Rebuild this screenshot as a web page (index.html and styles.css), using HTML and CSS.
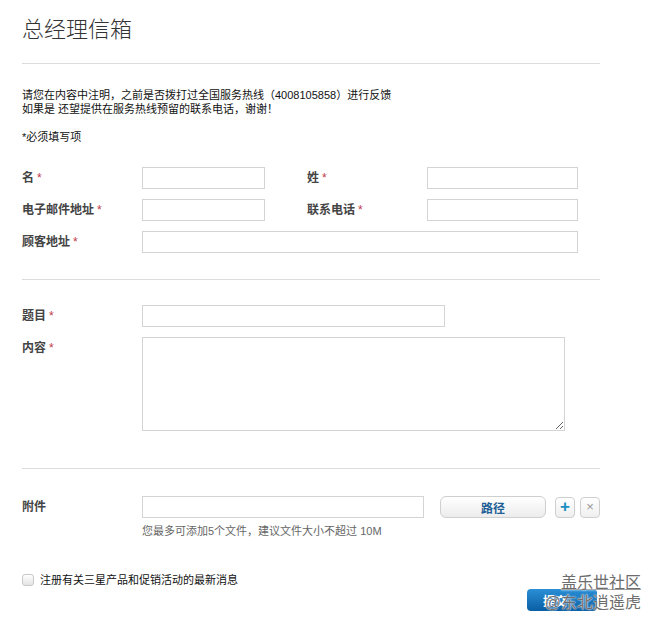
FILE: index.html
```html
<!DOCTYPE html>
<html lang="zh-CN">
<head>
    <meta charset="UTF-8">
    <meta name="viewport" content="width=device-width, initial-scale=1.0">
    <title>总经理信箱</title>
    <link rel="stylesheet" href="styles.css">
</head>
<body>
    <div class="mailbox">
        <h1 class="mailbox-title">总经理信箱</h1>
        <div class="divider"></div>

        <div class="notice">
            <p>请您在内容中注明，之前是否拨打过全国服务热线（4008105858）进行反馈</p>
            <p>如果是 还望提供在服务热线预留的联系电话，谢谢！</p>
        </div>
        <p class="required-note">*必须填写项</p>

        <form class="mail-form" onsubmit="return false">
            <div class="section section-contact">
                <div class="form-row">
                    <label class="field-label" for="firstName">名<span class="req">*</span></label>
                    <input class="field-input input-short" type="text" id="firstName">
                    <label class="field-label label-second" for="lastName">姓<span class="req">*</span></label>
                    <input class="field-input input-medium" type="text" id="lastName">
                </div>
                <div class="form-row">
                    <label class="field-label" for="email">电子邮件地址<span class="req">*</span></label>
                    <input class="field-input input-short" type="text" id="email">
                    <label class="field-label label-second" for="phone">联系电话<span class="req">*</span></label>
                    <input class="field-input input-medium" type="text" id="phone">
                </div>
                <div class="form-row">
                    <label class="field-label" for="address">顾客地址<span class="req">*</span></label>
                    <input class="field-input input-full" type="text" id="address">
                </div>
            </div>
            <div class="divider"></div>

            <div class="section section-message">
                <div class="form-row">
                    <label class="field-label" for="subject">题目<span class="req">*</span></label>
                    <input class="field-input input-subject" type="text" id="subject">
                </div>
                <div class="form-row row-top">
                    <label class="field-label label-top" for="content">内容<span class="req">*</span></label>
                    <textarea class="field-input field-textarea" id="content"></textarea>
                </div>
            </div>
            <div class="divider"></div>

            <div class="section section-attach">
                <div class="form-row">
                    <span class="field-label">附件</span>
                    <input class="field-input input-file" type="text">
                    <button type="button" class="path-button">路径</button>
                    <button type="button" class="icon-button icon-add">+</button>
                    <button type="button" class="icon-button icon-remove">×</button>
                </div>
                <p class="attach-hint">您最多可添加5个文件，建议文件大小不超过 10M</p>
            </div>

            <label class="subscribe">
                <span class="checkbox"></span>
                注册有关三星产品和促销活动的最新消息
            </label>

            <div class="form-actions">
                <button type="submit" class="submit-button">提交</button>
            </div>
        </form>
    </div>

    <div class="watermark">
        <span class="watermark-site">盖乐世社区</span>
        <span class="watermark-user">@东北逍遥虎</span>
    </div>
</body>
</html>
```

FILE: styles.css
```css
* {
    margin: 0;
    padding: 0;
    box-sizing: border-box;
    font-family: "Liberation Sans", "Noto Sans CJK SC", sans-serif;
}

body {
    background: white;
    color: #222;
    font-size: 12px;
}

.mailbox {
    width: 600px;
    padding: 17px 0 0 22px;
}

.mailbox-title {
    font-size: 22px;
    font-weight: 300;
    line-height: 26px;
    color: #333;
    margin-bottom: 20px;
}

.divider {
    height: 1px;
    background: #dcdcdc;
}

.notice {
    margin-top: 24px;
    font-size: 11px;
    line-height: 14px;
    color: #111;
}

.required-note {
    margin-top: 14px;
    font-size: 11px;
    line-height: 14px;
    color: #111;
}

.section {
    display: flex;
    flex-direction: column;
    gap: 10px;
}

.section-contact {
    padding: 23px 0 26px;
}

.section-message {
    padding: 25px 0 37px;
}

.section-attach {
    padding: 27px 0 0;
    gap: 6px;
}

.form-row {
    display: flex;
    align-items: center;
}

.row-top {
    align-items: flex-start;
}

.field-label {
    width: 120px;
    flex-shrink: 0;
    font-weight: bold;
    color: #444;
    line-height: 14px;
}

.label-top {
    padding-top: 4px;
}

.label-second {
    margin-left: 42px;
}

.req {
    color: #c0394b;
    margin-left: 3px;
    font-weight: normal;
}

.field-input {
    height: 22px;
    border: 1px solid #d4d4d4;
    background: white;
    outline: none;
}

.input-short {
    width: 123px;
}

.input-medium {
    width: 151px;
}

.input-full {
    width: 436px;
}

.input-subject {
    width: 303px;
}

.field-textarea {
    width: 423px;
    height: 94px;
    resize: both;
}

.input-file {
    width: 282px;
}

.path-button {
    width: 106px;
    height: 22px;
    margin-left: 16px;
    border: 1px solid #cfcfcf;
    border-radius: 6px;
    background: linear-gradient(#ffffff, #ececec);
    color: #1d5f96;
    font-weight: bold;
    font-size: 12px;
    cursor: pointer;
}

.icon-button {
    width: 20px;
    height: 21px;
    border: 1px solid #cfcfcf;
    border-radius: 4px;
    background: linear-gradient(#ffffff, #efefef);
    cursor: pointer;
    line-height: 18px;
}

.icon-add {
    margin-left: 9px;
    color: #1b8fc2;
    font-size: 17px;
    font-weight: bold;
}

.icon-remove {
    margin-left: 5px;
    color: #999;
    font-size: 13px;
}

.attach-hint {
    padding-left: 120px;
    color: #666;
    font-size: 11px;
    line-height: 14px;
}

.subscribe {
    display: flex;
    align-items: center;
    gap: 6px;
    margin-top: 35px;
    color: #111;
    font-size: 11px;
    line-height: 14px;
}

.checkbox {
    width: 12px;
    height: 12px;
    border: 1px solid #c8c8c8;
    border-radius: 3px;
    background: linear-gradient(#ffffff, #e4e4e4);
}

.form-actions {
    display: flex;
    justify-content: flex-end;
    margin-top: 2px;
}

.submit-button {
    width: 70px;
    height: 22px;
    margin-right: 3px;
    border: none;
    border-radius: 4px;
    background: linear-gradient(#2a8fd6, #0a5ea4);
    color: white;
    font-weight: bold;
    font-size: 12px;
    text-align: left;
    padding-left: 16px;
}

.watermark {
    position: absolute;
    left: 543px;
    top: 573px;
    width: 98px;
    display: flex;
    flex-direction: column;
    align-items: flex-end;
    color: #6d6d6d;
    font-size: 16px;
    line-height: 20px;
    text-shadow: 0 0 2px white, 0 0 1px white;
}

.watermark-site {
    text-decoration: underline;
    text-decoration-color: #aaa;
}
```
